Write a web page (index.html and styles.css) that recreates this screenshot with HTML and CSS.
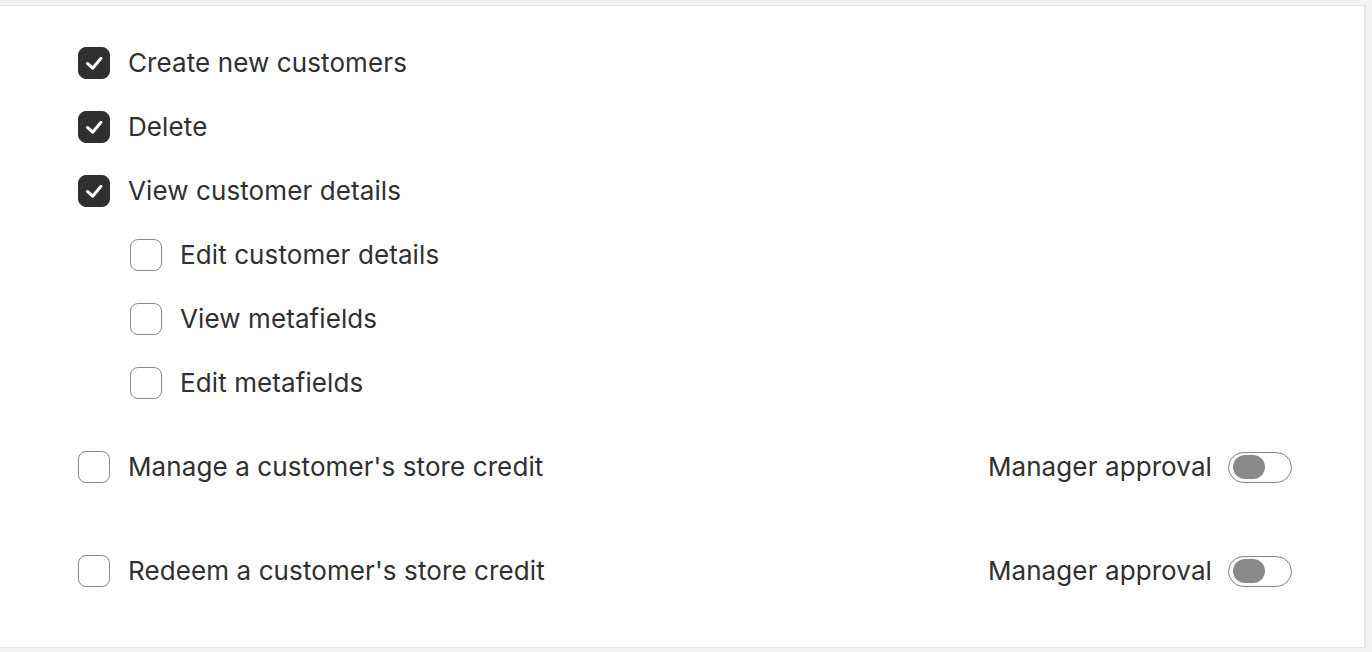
FILE: index.html
```html
<!DOCTYPE html>
<html lang="en">
<head>
<meta charset="utf-8">
<title>Customer permissions</title>
<link rel="stylesheet" href="styles.css">
</head>
<body>
<div class="frame">
  <section class="panel">
    <ul class="perms">
      <li class="perm">
        <span class="box checked"><svg viewBox="0 0 32 32"><path d="M9 16.5l5.5 5 9-10.5"/></svg></span>
        <span class="label">Create new customers</span>
      </li>
      <li class="perm">
        <span class="box checked"><svg viewBox="0 0 32 32"><path d="M9 16.5l5.5 5 9-10.5"/></svg></span>
        <span class="label">Delete</span>
      </li>
      <li class="perm">
        <span class="box checked"><svg viewBox="0 0 32 32"><path d="M9 16.5l5.5 5 9-10.5"/></svg></span>
        <span class="label">View customer details</span>
      </li>
      <li class="perm sub">
        <span class="box"></span>
        <span class="label">Edit customer details</span>
      </li>
      <li class="perm sub">
        <span class="box"></span>
        <span class="label">View metafields</span>
      </li>
      <li class="perm sub">
        <span class="box"></span>
        <span class="label">Edit metafields</span>
      </li>
      <li class="perm credit first">
        <span class="box"></span>
        <span class="label">Manage a customer's store credit</span>
        <span class="approval">Manager approval <span class="toggle"><span class="knob"></span></span></span>
      </li>
      <li class="perm credit second">
        <span class="box"></span>
        <span class="label">Redeem a customer's store credit</span>
        <span class="approval">Manager approval <span class="toggle"><span class="knob"></span></span></span>
      </li>
    </ul>
  </section>
</div>
</body>
</html>
```
FILE: styles.css
```css
html, body {
  margin: 0;
  padding: 0;
}

body {
  background: #f3f3f3;
  font-family: Inter, "Liberation Sans", sans-serif;
  color: #303030;
  width: 1372px;
  height: 652px;
  overflow: hidden;
}

.frame {
  padding-top: 5px;
}

.panel {
  width: 1366px;
  height: 643px;
  box-sizing: border-box;
  background: #fff;
  border-top: 1px solid #e3e3e3;
  border-right: 2px solid #e6e6e6;
  border-bottom: 1px solid #e6e6e6;
  padding: 25px 72px 0 78px;
}

.perms {
  list-style: none;
  margin: 0;
  padding: 0;
}

.perm {
  display: flex;
  align-items: center;
  height: 64px;
}

.perm.sub {
  padding-left: 52px;
}

.perm.credit.first {
  margin-top: 20px;
}

.perm.credit.second {
  margin-top: 40px;
}

.box {
  width: 32px;
  height: 32px;
  box-sizing: border-box;
  border-radius: 8px;
  border: 1.5px solid #8a8a8a;
  background: #fff;
  flex: none;
  display: flex;
  align-items: center;
  justify-content: center;
}

.box.checked {
  background: #303030;
  border-color: #303030;
}

.box svg {
  width: 32px;
  height: 32px;
  fill: none;
  stroke: #fff;
  stroke-width: 3.2;
  stroke-linecap: round;
  stroke-linejoin: round;
}

.label {
  margin-left: 18px;
  font-size: 26px;
  line-height: 32px;
  letter-spacing: 0.1px;
}

.approval {
  margin-left: auto;
  display: flex;
  align-items: center;
  gap: 16px;
  font-size: 26px;
  line-height: 32px;
  letter-spacing: 0.1px;
}

.toggle {
  width: 64px;
  height: 31px;
  box-sizing: border-box;
  border: 1px solid #8a8a8a;
  border-radius: 16px;
  background: #fff;
  box-shadow: inset 0 0 0 1px #f2f2f2;
  display: flex;
  align-items: center;
  padding-left: 4px;
}

.knob {
  width: 32px;
  height: 24px;
  border-radius: 12px;
  background: #8a8a8a;
}
```
